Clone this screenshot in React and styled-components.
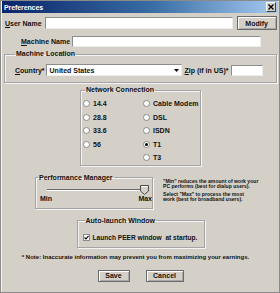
import React from 'react'
import styled, { createGlobalStyle } from 'styled-components'

const Global = createGlobalStyle`
  html, body { margin: 0; padding: 0; background: #d4d0c8; }
  body { font-family: "Liberation Sans", Arial, sans-serif; }
`

const Window = styled.div`
  width: 280px;
  height: 293px;
  box-sizing: border-box;
  background: #d4d0c8;
  border: 1px solid #8a8a8a;
  box-shadow: inset 1px 1px 0 #f4f4f4;
  display: flex;
  flex-direction: column;
  font-family: "Liberation Sans", Arial, sans-serif;
  font-weight: bold;
  color: #111;
`

const TitleBar = styled.div`
  height: 12px;
  margin: 0 1px;
  background: linear-gradient(to right, #0a246a 0%, #3a6ea5 55%, #a6caf0 100%);
  display: flex;
  align-items: center;
  justify-content: space-between;
  padding: 0 2px;
`

const Title = styled.span`
  color: #fff;
  font-size: 7px;
  font-weight: bold;
  letter-spacing: -0.1px;
`

const CloseBox = styled.span`
  width: 8px;
  height: 8px;
  background: #d4d0c8;
  border: 1px solid;
  border-color: #fff #404040 #404040 #fff;
  display: flex;
  align-items: center;
  justify-content: center;
`

const Body = styled.div`
  display: flex;
  flex-direction: column;
  padding: 0 2px 0 3px;
`

const FieldRow = styled.div`
  display: flex;
  align-items: center;
  margin-top: ${p => p.$top}px;
  padding-left: ${p => p.$indent || 0}px;
`

const Label = styled.span`
  font-size: 7px;
  white-space: nowrap;
  margin-right: ${p => p.$gap ?? 3}px;
  margin-left: ${p => p.$ml || 0}px;
  u { text-decoration-thickness: 0.6px; text-underline-offset: 1px; }
`

const TextBox = styled.div`
  width: ${p => p.$w}px;
  height: ${p => p.$h}px;
  box-sizing: border-box;
  background: #fff;
  border: 1px solid;
  border-color: #8c8c8c #ececec #ececec #8c8c8c;
`

const Combo = styled.div`
  width: 136px;
  height: 12px;
  box-sizing: border-box;
  background: #fff;
  border: 1px solid;
  border-color: #8c8c8c #ececec #ececec #8c8c8c;
  display: flex;
  align-items: center;
  justify-content: space-between;
  padding-left: 3px;
  font-size: 7px;
`

const ComboArrow = styled.span`
  width: 9px;
  height: 10px;
  display: flex;
  align-items: center;
  justify-content: center;
`

const PushButton = styled.div`
  width: ${p => p.$w}px;
  height: ${p => p.$h}px;
  box-sizing: border-box;
  background: #d4d0c8;
  border: 1px solid #6a6a6a;
  box-shadow: inset 1px 1px 0 #fff, inset -1px -1px 0 #a8a8a8;
  display: flex;
  align-items: center;
  justify-content: center;
  font-size: 7px;
  margin-left: ${p => p.$ml || 0}px;
`

const Group = styled.fieldset`
  margin: ${p => p.$top}px 0 0 0;
  padding: ${p => p.$pt}px ${p => p.$pr || 0}px ${p => p.$pb}px ${p => p.$pl || 0}px;
  border: 1px solid #a4a4a4;
  box-shadow: inset 1px 1px 0 #f4f4f4, 1px 1px 0 #f4f4f4;
  width: ${p => (p.$w ? `${p.$w}px` : 'auto')};
  box-sizing: border-box;
  align-self: ${p => p.$align || 'stretch'};
  min-width: 0;
`

const Legend = styled.legend`
  font-size: 7px;
  line-height: 10px;
  padding: 0 1px;
  margin-left: ${p => p.$ml ?? 1}px;
`

const RadioColumns = styled.div`
  display: flex;
`

const RadioColumn = styled.div`
  display: flex;
  flex-direction: column;
  width: ${p => p.$w}px;
`

const RadioItem = styled.div`
  height: 13.5px;
  display: flex;
  align-items: center;
  font-size: 7px;
`

const RadioDot = styled.span`
  width: 7px;
  height: 7px;
  box-sizing: border-box;
  border-radius: 50%;
  background: #fff;
  border: 1px solid #8a8a8a;
  margin-right: 3px;
  display: flex;
  align-items: center;
  justify-content: center;
  &::after {
    content: '';
    width: 3px;
    height: 3px;
    border-radius: 50%;
    background: ${p => (p.$on ? '#000' : 'transparent')};
  }
`

const PerfRow = styled.div`
  display: flex;
  align-items: flex-start;
  margin-top: 7px;
  padding-left: 31px;
`

const SliderArea = styled.div`
  height: 10px;
  margin: 2px 4px 0 11px;
  position: relative;
  display: flex;
  align-items: center;
`

const Track = styled.div`
  flex: 1;
  height: 1px;
  background: #6a6a6a;
  box-shadow: 0 1px 0 #fff;
`

const Thumb = styled.svg`
  position: absolute;
  right: -1px;
  top: 0;
`

const MinMax = styled.div`
  display: flex;
  justify-content: space-between;
  font-size: 7px;
  line-height: 8px;
  padding: 0 0 0 4px;
`

const SideNote = styled.div`
  margin-left: 10px;
  margin-top: 6px;
  font-size: 5.1px;
  line-height: 5px;
  white-space: nowrap;
  p { margin: 0 0 3px 0; }
`

const CheckRow = styled.div`
  display: flex;
  align-items: center;
  height: 10px;
  font-size: 6.6px;
  white-space: nowrap;
`

const CheckBox = styled.span`
  width: 7px;
  height: 7px;
  box-sizing: border-box;
  background: #fff;
  border: 1px solid #8a8a8a;
  margin-right: 3px;
  display: flex;
  align-items: center;
  justify-content: center;
`

const Footnote = styled.div`
  margin-top: 6px;
  padding-right: 10px;
  text-align: center;
  font-size: 6px;
  line-height: 7px;
  white-space: nowrap;
`

const ButtonBar = styled.div`
  display: flex;
  justify-content: center;
  gap: 16px;
  margin-top: 9px;
`

const Radio = ({ label, on }) => (
  <RadioItem>
    <RadioDot $on={on} />
    {label}
  </RadioItem>
)

export default function App() {
  return (
    <>
      <Global />
      <Window>
        <TitleBar>
          <Title>Preferences</Title>
          <CloseBox>
            <svg width="6" height="6" viewBox="0 0 6 6">
              <path d="M0.5 0.5 L5.5 5.5 M5.5 0.5 L0.5 5.5" stroke="#000" strokeWidth="1.3" />
            </svg>
          </CloseBox>
        </TitleBar>
        <Body>
          <FieldRow $top={3} $indent={1}>
            <Label><u>U</u>ser Name</Label>
            <TextBox $w={188} $h={12} />
            <PushButton $w={40} $h={14} $ml={4}>Modify</PushButton>
          </FieldRow>
          <FieldRow $top={6} $indent={17}>
            <Label $gap={2}><u>M</u>achine Name</Label>
            <TextBox $w={189} $h={11} />
          </FieldRow>

          <Group $top={2} $pt={5} $pb={6} $pl={10}>
            <Legend $ml={0}>Machine Location</Legend>
            <FieldRow $top={0}>
              <Label $gap={1}><u>C</u>ountry*</Label>
              <Combo>
                United States
                <ComboArrow>
                  <svg width="5" height="3" viewBox="0 0 5 3">
                    <path d="M0 0 H5 L2.5 3 Z" fill="#000" />
                  </svg>
                </ComboArrow>
              </Combo>
              <Label $gap={2} $ml={3}><u>Z</u>ip (if in US)*</Label>
              <TextBox $w={32} $h={11} />
            </FieldRow>
          </Group>

          <Group $top={2} $w={121} $align="center" $pt={2} $pb={0} $pl={2}>
            <Legend $ml={2}>Network Connection</Legend>
            <RadioColumns>
              <RadioColumn $w={60}>
                <Radio label="14.4" />
                <Radio label="28.8" />
                <Radio label="33.6" />
                <Radio label="56" />
              </RadioColumn>
              <RadioColumn $w={56}>
                <Radio label="Cable Modem" />
                <Radio label="DSL" />
                <Radio label="ISDN" />
                <Radio label="T1" on />
                <Radio label="T3" />
              </RadioColumn>
            </RadioColumns>
          </Group>

          <PerfRow>
            <Group $top={0} $w={118} $pt={0} $pb={5}>
              <Legend $ml={2}>Performance Manager</Legend>
              <SliderArea>
                <Track />
                <Thumb width="9" height="10" viewBox="0 0 9 10">
                  <path d="M0.5 0.5 H8.5 V6 L4.5 9.5 L0.5 6 Z" fill="#d4d0c8" stroke="#4a4a4a" />
                  <path d="M1.5 1.5 H7.5" stroke="#fff" />
                </Thumb>
              </SliderArea>
              <MinMax>
                <span>Min</span>
                <span>Max</span>
              </MinMax>
            </Group>
            <SideNote>
              <p>"Min" reduces the amount of work your<br />PC performs (best for dialup users).</p>
              <p>Select "Max" to process the most<br />work (best for broadband users).</p>
            </SideNote>
          </PerfRow>

          <Group $top={7} $w={128} $align="center" $pt={7} $pb={4} $pl={5}>
            <Legend $ml={2}>Auto-launch Window</Legend>
            <CheckRow>
              <CheckBox>
                <svg width="5" height="5" viewBox="0 0 5 5">
                  <path d="M0.5 2.5 L2 4 L4.5 0.8" stroke="#000" strokeWidth="1.1" fill="none" />
                </svg>
              </CheckBox>
              Launch PEER window&nbsp; at startup.
            </CheckRow>
          </Group>

          <Footnote>* Note: Inaccurate information may prevent you from maximizing your earnings.</Footnote>

          <ButtonBar>
            <PushButton $w={32} $h={12}>Save</PushButton>
            <PushButton $w={38} $h={12}>Cancel</PushButton>
          </ButtonBar>
        </Body>
      </Window>
    </>
  )
}
